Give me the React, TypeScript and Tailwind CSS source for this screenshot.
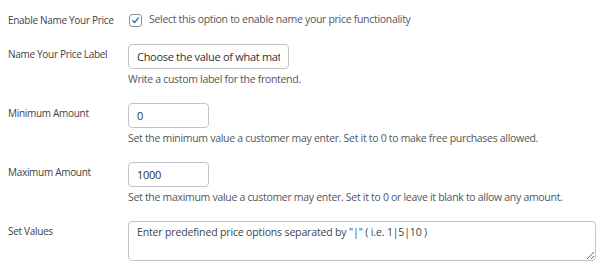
import React from 'react';

type FieldRowProps = {
  label: string;
  children: React.ReactNode;
  description?: string;
};

const FieldRow: React.FC<FieldRowProps> = ({ label, children, description }) => (
  <div className="flex mb-[15px]">
    <div className="w-[128px] shrink-0 pl-2 text-[10px] tracking-[-0.3px] leading-[20px] text-[#3c434a] whitespace-nowrap">
      {label}
    </div>
    <div className="flex flex-col">
      {children}
      {description && (
        <p className="mt-[1px] text-[10.5px] tracking-[-0.3px] leading-[18px] text-[#50575e] whitespace-nowrap">
          {description}
        </p>
      )}
    </div>
  </div>
);

const inputCls =
  'h-[25px] px-2 rounded-[4px] border border-[#c3c4c7] bg-white text-[11px] tracking-[-0.3px] text-[#2c3338] outline-none';

const App: React.FC = () => {
  return (
    <div className="w-[600px] h-[268px] bg-white overflow-hidden pt-[10px] font-['Open_Sans',Arial,sans-serif]">
      {/* enable toggle */}
      <div className="flex items-center h-[20px] mb-[14px]">
        <div className="w-[128px] shrink-0 pl-2 text-[10px] tracking-[-0.3px] text-[#3c434a] whitespace-nowrap">
          Enable Name Your Price
        </div>
        <label className="flex items-center gap-[7px] text-[10.5px] tracking-[-0.3px] text-[#50575e] whitespace-nowrap">
          <span className="w-[13px] h-[13px] ml-px rounded-[3px] border border-[#8c8f94] bg-white flex items-center justify-center">
            <svg viewBox="0 0 20 20" width="13" height="13">
              <path
                d="M5 10.5 L8.3 13.8 L15 5.5"
                fill="none"
                stroke="#2271b1"
                strokeWidth="2.4"
                strokeLinecap="round"
                strokeLinejoin="round"
              />
            </svg>
          </span>
          Select this option to enable name your price functionality
        </label>
      </div>

      <FieldRow label="Name Your Price Label" description="Write a custom label for the frontend.">
        <input type="text" readOnly value="Choose the value of what matters" className={`w-[161px] ${inputCls}`} />
      </FieldRow>

      <FieldRow
        label="Minimum Amount"
        description="Set the minimum value a customer may enter. Set it to 0 to make free purchases allowed."
      >
        <input type="text" readOnly value="0" className={`w-[81px] ${inputCls}`} />
      </FieldRow>

      <FieldRow
        label="Maximum Amount"
        description="Set the maximum value a customer may enter. Set it to 0 or leave it blank to allow any amount."
      >
        <input type="text" readOnly value="1000" className={`w-[81px] ${inputCls}`} />
      </FieldRow>

      <FieldRow label="Set Values">
        <textarea
          readOnly
          placeholder='Enter predefined price options separated by "|" ( i.e. 1|5|10 )'
          className="w-[468px] h-[40px] px-2 pt-[1px] rounded-[4px] border border-[#c3c4c7] bg-white text-[10.5px] tracking-[-0.15px] leading-[18px] text-[#2c3338] placeholder:text-[#3c434a] outline-none"
        />
      </FieldRow>
    </div>
  );
};

export default App;
